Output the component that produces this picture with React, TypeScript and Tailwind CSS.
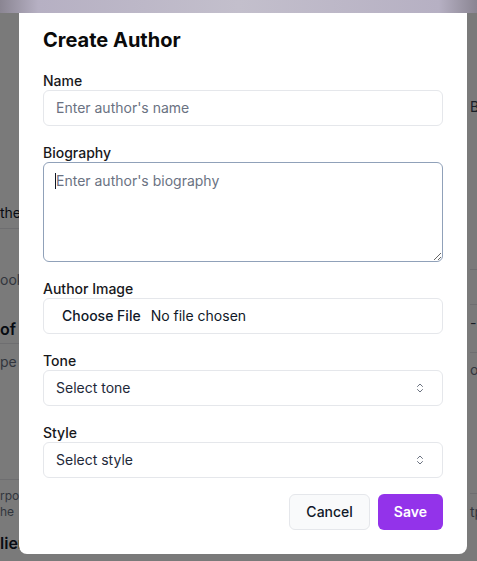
import { ReactNode } from "react";

const Chevrons = () => (
  <svg width="8" height="12" viewBox="0 0 8 12" fill="none" stroke="#6b7280" strokeWidth="1" strokeLinecap="round" strokeLinejoin="round">
    <path d="M1.5 4.5 L4 2 L6.5 4.5" />
    <path d="M1.5 7.5 L4 10 L6.5 7.5" />
  </svg>
);

const Field = ({ label, children }: { label: string; children: ReactNode }) => (
  <div className="flex flex-col">
    <label className="h-5 pt-px text-sm leading-[19px] font-medium text-[#18181b]">{label}</label>
    {children}
  </div>
);

const SelectBox = ({ text }: { text: string }) => (
  <div className="flex h-9 items-center justify-between rounded-md border border-gray-200 bg-white pl-3 pr-[18px] text-sm text-gray-800">
    <span>{text}</span>
    <Chevrons />
  </div>
);

const BackgroundPage = () => (
  <div className="flex h-full w-full bg-white text-sm text-gray-900">
    <div className="flex w-[467px] shrink-0 flex-col">
      <div className="h-[203px]" />
      <div className="h-[20px] leading-5">the</div>
      <div className="h-[6px] border-b border-gray-200" />
      <div className="h-[41px]" />
      <div className="leading-5 text-gray-500">ook</div>
      <div className="h-[29px]" />
      <div className="text-base leading-5 font-semibold">of t</div>
      <div className="h-[5px] border-b border-gray-200" />
      <div className="h-[8px]" />
      <div className="leading-5 text-gray-500">pe t</div>
      <div className="h-[108px] border-b border-gray-200" />
      <div className="pt-[8px] text-xs leading-4 text-gray-500">
        <div>rpo</div>
        <div>he</div>
      </div>
      <div className="pt-[13px] text-base leading-5 font-semibold">lien</div>
    </div>
    <div className="flex flex-1 flex-col overflow-hidden pl-[3px]">
      <div className="h-[97px]" />
      <div className="leading-5 text-gray-700">B</div>
      <div className="h-[153px] border-b border-gray-200" />
      <div className="h-[35px] border-b border-gray-200" />
      <div className="h-[8px]" />
      <div className="leading-5 text-gray-700">-</div>
      <div className="h-[20px] border-b border-gray-200" />
      <div className="h-[7px]" />
      <div className="leading-5 text-gray-500">oll</div>
      <div className="h-[114px] border-b border-gray-200" />
      <div className="pt-[8px] leading-5 text-gray-500">tp</div>
    </div>
  </div>
);

const App = () => {
  return (
    <div className="relative h-[561px] w-[477px] overflow-hidden font-['Inter','Noto_Sans',sans-serif]">
      <BackgroundPage />
      <div className="absolute inset-0 flex flex-col bg-[#000000]/[0.52]">
        <div className="h-[13px] w-full bg-[linear-gradient(to_right,#8a8592_0%,#b6b0c3_8%,#c3bfcc_50%,#b6b0c3_92%,#8a8592_100%)]" />
        <div className="ml-[19px] flex w-[448px] flex-col rounded-b-lg bg-white px-6 pt-[13px] pb-6">
          <h2 className="mb-4 text-xl leading-7 font-bold text-[#0a0a0a]">Create Author</h2>
          <div className="flex flex-col gap-4">
            <Field label="Name">
              <div className="flex h-9 items-center rounded-md border border-gray-200 bg-white px-3 text-sm text-gray-500">
                Enter author's name
              </div>
            </Field>
            <Field label="Biography">
              <div className="relative">
                <textarea
                  readOnly
                  placeholder="Enter author's biography"
                  className="block h-[100px] w-full resize-y rounded-md border border-slate-400 bg-white px-3 py-2 text-sm leading-5 text-gray-900 outline-none placeholder:text-gray-500"
                />
                <span className="absolute top-[11px] left-[12px] h-[16px] w-px bg-gray-900" />
              </div>
            </Field>
            <Field label="Author Image">
              <div className="flex h-9 items-center gap-[10px] rounded-md border border-gray-200 bg-white pl-[18px] text-sm text-gray-900">
                <span className="font-medium">Choose File</span>
                <span>No file chosen</span>
              </div>
            </Field>
            <Field label="Tone">
              <SelectBox text="Select tone" />
            </Field>
            <Field label="Style">
              <SelectBox text="Select style" />
            </Field>
          </div>
          <div className="mt-4 flex justify-end gap-2">
            <button className="h-9 rounded-md border border-gray-200 bg-[#f9fafb] px-4 text-sm font-medium text-gray-900">
              Cancel
            </button>
            <button className="h-9 rounded-md bg-[#9333ea] px-4 text-sm font-semibold text-white">
              Save
            </button>
          </div>
        </div>
      </div>
    </div>
  );
};

export default App;
